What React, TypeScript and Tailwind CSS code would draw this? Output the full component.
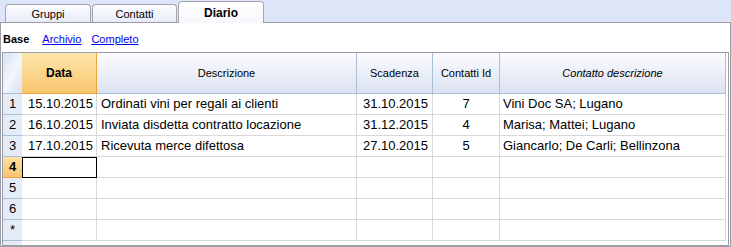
const rows = [
  { n: '1', data: '15.10.2015', desc: 'Ordinati vini per regali ai clienti', scad: '31.10.2015', id: '7', contatto: 'Vini Doc SA; Lugano' },
  { n: '2', data: '16.10.2015', desc: 'Inviata disdetta contratto locazione', scad: '31.12.2015', id: '4', contatto: 'Marisa; Mattei; Lugano' },
  { n: '3', data: '17.10.2015', desc: 'Ricevuta merce difettosa', scad: '27.10.2015', id: '5', contatto: 'Giancarlo; De Carli; Bellinzona' },
  { n: '4', data: '', desc: '', scad: '', id: '', contatto: '', active: true },
  { n: '5', data: '', desc: '', scad: '', id: '', contatto: '' },
  { n: '6', data: '', desc: '', scad: '', id: '', contatto: '' },
  { n: '*', data: '', desc: '', scad: '', id: '', contatto: '' },
];

const cols = 'grid grid-cols-[19px_75px_260px_76px_67px_226px]';

export default function App() {
  return (
    <div className="w-[731px] h-[247px] bg-[#dde5f8] overflow-hidden font-['Liberation_Sans',Arial,sans-serif] text-[11px] text-black">
      {/* tabs */}
      <div className="flex items-end h-[22px] pl-[5px] gap-[1px]">
        <div className="w-[86px] h-[18px] rounded-t-[4px] border border-b-0 border-[#a4a4ac] bg-gradient-to-b from-[#fdfdff] to-[#e6ebf8] flex items-center justify-center pt-px">
          Gruppi
        </div>
        <div className="w-[85px] h-[18px] rounded-t-[4px] border border-b-0 border-[#a4a4ac] bg-gradient-to-b from-[#fdfdff] to-[#e6ebf8] flex items-center justify-center pt-px">
          Contatti
        </div>
        <div className="relative z-10 -mb-px w-[86px] h-[22px] rounded-t-[4px] border border-b-0 border-[#a4a4ac] bg-gradient-to-b from-white to-[#f6f7fb] flex items-center justify-center font-bold text-[12px]">
          Diario
        </div>
      </div>

      {/* panel */}
      <div className="h-[225px] bg-white border border-[#9c9ca6] p-px">
        <div className="h-[28px] flex items-center pl-px pt-[2px]">
          <span className="font-bold">Base</span>
          <span className="ml-[13px] text-[#0000ee] underline">Archivio</span>
          <span className="ml-[10px] text-[#0000ee] underline">Completo</span>
        </div>

        <div className="h-[194px] border border-[#9c9ca6] bg-white flex flex-col">
          {/* header */}
          <div className={`${cols} h-[41px] text-[11px]`}>
            <div className="bg-gradient-to-br from-[#d6e1f5] via-[#f2f6fd] to-[#d8e3f4] border-b border-[#a9bed8]" />
            <div className="bg-gradient-to-b from-[#fde6ac] to-[#f9c66c] border-b border-r border-[#f3a238] flex items-center justify-center font-bold text-[12px]">
              Data
            </div>
            <div className="bg-gradient-to-b from-[#fbfcff] to-[#dce2f0] border-b border-r border-[#a9bed8] flex items-center justify-center">
              Descrizione
            </div>
            <div className="bg-gradient-to-b from-[#fbfcff] to-[#dce2f0] border-b border-r border-[#a9bed8] flex items-center justify-center">
              Scadenza
            </div>
            <div className="bg-gradient-to-b from-[#fbfcff] to-[#dce2f0] border-b border-r border-[#a9bed8] flex items-center justify-center">
              Contatti Id
            </div>
            <div className="bg-gradient-to-b from-[#fbfcff] to-[#dce2f0] border-b border-r border-[#a9bed8] flex items-center justify-center italic">
              Contatto descrizione
            </div>
          </div>

          {/* rows */}
          {rows.map((r) => (
            <div key={r.n} className={`${cols} h-[21px] text-[13px]`}>
              {r.active ? (
                <div className="bg-gradient-to-b from-[#fde2a2] to-[#f8c470] border-b border-[#f3a238] flex items-center justify-center font-bold">
                  {r.n}
                </div>
              ) : (
                <div className="bg-[#e4ecf7] border-b border-[#a9bed8] flex items-center justify-center">
                  {r.n}
                </div>
              )}
              <div className={`border-b border-r border-[#d8d8d8] flex items-center justify-end pr-[3px] ${r.active ? 'outline outline-1 -outline-offset-1 outline-black' : ''}`}>
                {r.data}
              </div>
              <div className="border-b border-r border-[#d8d8d8] flex items-center pl-[4px] whitespace-nowrap">
                {r.desc}
              </div>
              <div className="border-b border-r border-[#d8d8d8] flex items-center justify-end pr-[4px]">
                {r.scad}
              </div>
              <div className="border-b border-r border-[#d8d8d8] flex items-center justify-center">
                {r.id}
              </div>
              <div className="border-b border-r border-[#d8d8d8] flex items-center pl-[3px] whitespace-nowrap">
                {r.contatto}
              </div>
            </div>
          ))}

          {/* filler */}
          <div className="flex-1 flex">
            <div className="w-[19px] bg-[#e4ecf7]" />
          </div>
        </div>
      </div>
    </div>
  );
}
